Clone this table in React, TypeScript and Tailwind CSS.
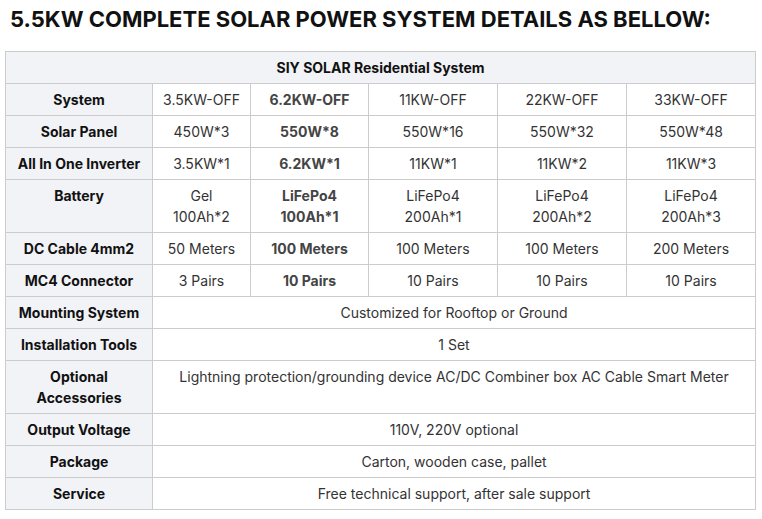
import React from "react";

const cols = [147, 98, 118, 129, 129, 129];

type Row = { label: React.ReactNode; values: React.ReactNode[] };

const rows: Row[] = [
  { label: "System", values: ["3.5KW-OFF", "6.2KW-OFF", "11KW-OFF", "22KW-OFF", "33KW-OFF"] },
  { label: "Solar Panel", values: ["450W*3", "550W*8", "550W*16", "550W*32", "550W*48"] },
  { label: "All In One Inverter", values: ["3.5KW*1", "6.2KW*1", "11KW*1", "11KW*2", "11KW*3"] },
  {
    label: "Battery",
    values: [
      <>Gel<br />100Ah*2</>,
      <>LiFePo4<br />100Ah*1</>,
      <>LiFePo4<br />200Ah*1</>,
      <>LiFePo4<br />200Ah*2</>,
      <>LiFePo4<br />200Ah*3</>,
    ],
  },
  { label: "DC Cable 4mm2", values: ["50 Meters", "100 Meters", "100 Meters", "100 Meters", "200 Meters"] },
  { label: "MC4 Connector", values: ["3 Pairs", "10 Pairs", "10 Pairs", "10 Pairs", "10 Pairs"] },
];

const spanRows: { label: React.ReactNode; value: string }[] = [
  { label: "Mounting System", value: "Customized for Rooftop or Ground" },
  { label: "Installation Tools", value: "1 Set" },
  {
    label: <>Optional<br />Accessories</>,
    value: "Lightning protection/grounding device AC/DC Combiner box AC Cable Smart Meter",
  },
  { label: "Output Voltage", value: "110V, 220V optional" },
  { label: "Package", value: "Carton, wooden case, pallet" },
  { label: "Service", value: "Free technical support, after sale support" },
];

const th = "border border-[#cccccc] bg-[#f2f3f7] px-2 py-[5px] align-top text-center font-bold text-[#111]";
const td = "border border-[#cccccc] bg-white px-2 py-[5px] align-top text-center text-[#333]";

export default function App() {
  return (
    <div className="w-[762px] h-[519px] bg-white font-['Inter','Liberation_Sans',sans-serif]">
      <h1 className="pl-[10px] pt-[4px] text-[22px] leading-[30px] font-bold text-[#111] whitespace-nowrap">
        5.5KW COMPLETE SOLAR POWER SYSTEM DETAILS AS BELLOW:
      </h1>
      <table className="ml-[5px] mt-[17px] w-[750px] table-fixed border-collapse text-[14px] leading-[21px]">
        <colgroup>
          {cols.map((w, i) => (
            <col key={i} style={{ width: w }} />
          ))}
        </colgroup>
        <tbody>
          <tr>
            <td colSpan={6} className={th}>
              SIY SOLAR Residential System
            </td>
          </tr>
          {rows.map((r, i) => (
            <tr key={i}>
              <td className={th}>{r.label}</td>
              {r.values.map((v, j) => (
                <td key={j} className={j === 1 ? `${td} font-bold !text-[#444]` : td}>
                  {v}
                </td>
              ))}
            </tr>
          ))}
          {spanRows.map((r, i) => (
            <tr key={i}>
              <td className={th}>{r.label}</td>
              <td colSpan={5} className={td}>
                {r.value}
              </td>
            </tr>
          ))}
        </tbody>
      </table>
    </div>
  );
}
